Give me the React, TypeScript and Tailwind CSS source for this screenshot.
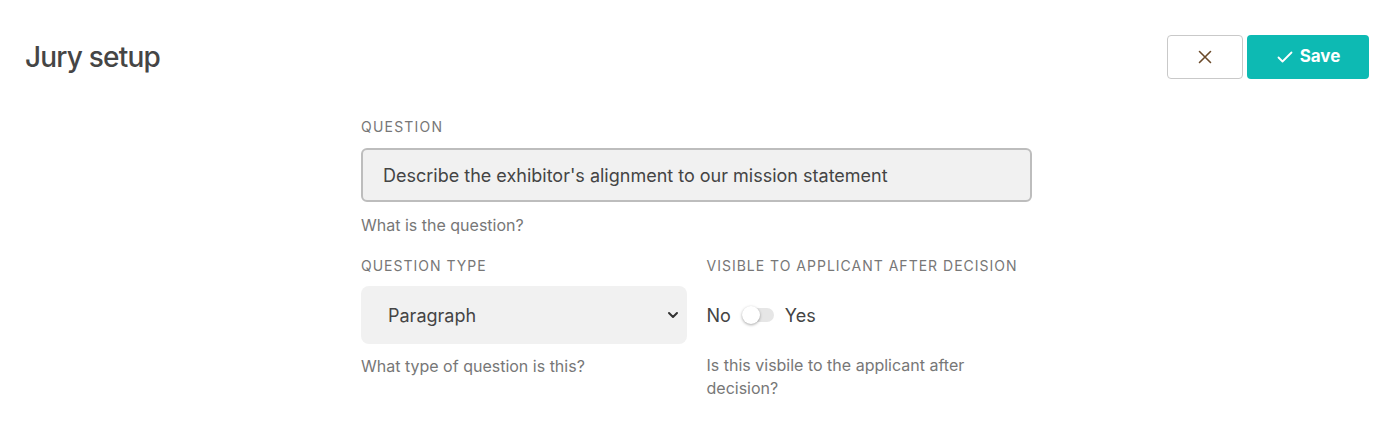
import { useState } from "react";

export default function App() {
  const [visible, setVisible] = useState(false);

  return (
    <div className="min-h-screen bg-white font-['Inter','Noto_Sans',sans-serif] text-[#444]">
      <header className="flex items-center justify-between pl-[25px] pr-[21px] pt-[35px]">
        <h1 className="text-[28px] font-medium leading-[44px] tracking-[-0.8px] text-[#454545]">Jury setup</h1>
        <div className="flex gap-1">
          <button className="flex h-[44px] w-[76px] items-center justify-center rounded border border-[#c9c9c9] bg-white text-[#6b4a2a]">
            <svg width="16" height="16" viewBox="0 0 16 16" fill="none" stroke="currentColor" strokeWidth="1.6" strokeLinecap="round">
              <path d="M2.5 2.5l11 11M13.5 2.5l-11 11" />
            </svg>
          </button>
          <button className="flex h-[44px] w-[122px] items-center justify-center gap-1.5 rounded bg-[#0dbab3] text-[17px] font-bold text-white">
            <svg width="18" height="18" viewBox="0 0 18 18" fill="none" stroke="currentColor" strokeWidth="1.8" strokeLinecap="round" strokeLinejoin="round">
              <path d="M2.5 9.5l4 4 9-9" />
            </svg>
            Save
          </button>
        </div>
      </header>

      <div className="flex justify-center pl-[3px]">
        <main className="mt-[38px] w-[671px]">
          <label className="block text-[14px] leading-5 tracking-[1.2px] text-[#777]">QUESTION</label>
          <input
            className="mt-[11px] h-[54px] w-full rounded-md border-2 border-[#bdbdbd] bg-[#f1f1f1] px-[20px] text-[18px] text-[#444] outline-none"
            defaultValue="Describe the exhibitor's alignment to our mission statement"
          />
          <p className="mt-[11px] text-[16px] leading-6 text-[#777]">What is the question?</p>

          <div className="mt-[19px] grid grid-cols-2 gap-5">
            <div>
              <label className="block text-[14px] leading-5 tracking-[1px] text-[#777]">QUESTION TYPE</label>
              <div className="relative mt-[10px]">
                <select className="h-[58px] w-full appearance-none rounded-lg bg-[#f1f1f1] pl-[27px] text-[18px] text-[#444] outline-none">
                  <option>Paragraph</option>
                </select>
                <svg className="pointer-events-none absolute right-[8px] top-[24px]" width="12" height="10" viewBox="0 0 12 10" fill="none" stroke="#333" strokeWidth="2" strokeLinecap="round" strokeLinejoin="round">
                  <path d="M2 3l4 4 4-4" />
                </svg>
              </div>
              <p className="mt-[10px] text-[16px] leading-6 text-[#777]">What type of question is this?</p>
            </div>
            <div>
              <label className="block text-[14px] leading-5 tracking-[1px] text-[#777]">VISIBLE TO APPLICANT AFTER DECISION</label>
              <div className="mt-[10px] flex h-[58px] items-center gap-[11px] text-[18px] text-[#444]">
                <span>No</span>
                <button
                  onClick={() => setVisible(!visible)}
                  className="relative h-[14px] w-[32px] rounded-full bg-[#e6e6e6]"
                >
                  <span
                    className={`absolute top-1/2 h-[18px] w-[18px] -translate-y-1/2 rounded-full bg-white shadow-[0_1px_3px_rgba(0,0,0,0.35)] ${visible ? "left-[14px]" : "left-0"}`}
                  />
                </button>
                <span>Yes</span>
              </div>
              <p className="mt-[10px] max-w-[300px] text-[16px] leading-[23px] text-[#777]">
                Is this visbile to the applicant after decision?
              </p>
            </div>
          </div>
        </main>
      </div>
    </div>
  );
}
